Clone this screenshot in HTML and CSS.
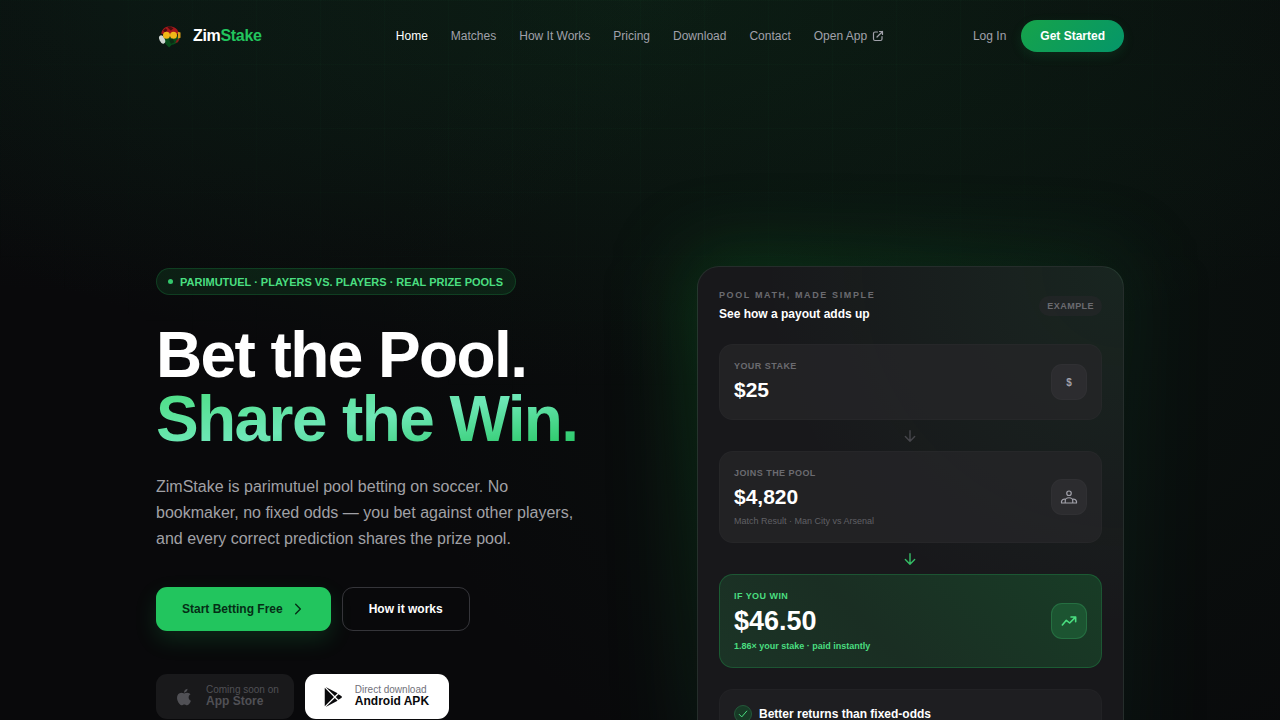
FILE: index.html
```html
<!DOCTYPE html>
<html lang="en">
<head>
<meta charset="utf-8">
<meta name="viewport" content="width=device-width, initial-scale=1">
<title>ZimStake</title>
<link rel="stylesheet" href="styles.css">
</head>
<body>
<div class="page">
  <header class="header container">
    <a class="brand" href="#">
      <svg class="brand-mark" viewBox="0 0 32 32" aria-hidden="true">
        <path d="M6 13C7 7 11 5 16 5s9 3 10 8l-5 2H10z" fill="#a5181b"/>
        <path d="M13 6l3-1 4 2-3 3zM8 10l3-3 2 2-2 3z" fill="#4d0c0f"/>
        <path d="M8 18h14l5-3c1 6-3 10-9 11l-3 3-4-4z" fill="#074d1b"/>
        <ellipse cx="7" cy="20" rx="3" ry="5" transform="rotate(-25 7 20)" fill="#cfd6d2"/>
        <circle cx="12" cy="15" r="4" fill="#f0b818"/>
        <circle cx="20" cy="15" r="4" fill="#f0b818"/>
        <path d="M25 11l3 1v6l-3 1z" fill="#d99d18"/>
        <path d="M15 20l4-1 2 4-4 2z" fill="#0d2b15"/>
        <path d="M24 20l3-1-2 4-3 1z" fill="#8c1a1a"/>
      </svg>
      <span>Zim<span class="brand-accent">Stake</span></span>
    </a>
    <nav class="nav" aria-label="Main">
      <a class="active" href="#">Home</a>
      <a href="#">Matches</a>
      <a href="#">How It Works</a>
      <a href="#">Pricing</a>
      <a href="#">Download</a>
      <a href="#">Contact</a>
      <a class="external" href="#">Open App
        <svg class="icon-line" width="12" height="12" viewBox="0 0 24 24" aria-hidden="true"><path d="M11 4H6a3 3 0 0 0-3 3v11a3 3 0 0 0 3 3h11a3 3 0 0 0 3-3v-5M15 3h6v6M21 3L10 14"/></svg>
      </a>
    </nav>
    <div class="account">
      <a class="login" href="#">Log In</a>
      <button class="get-started" type="button">Get Started</button>
    </div>
  </header>

  <main class="hero container">
    <section class="intro">
      <p class="pill"><span class="dot"></span>PARIMUTUEL · PLAYERS VS. PLAYERS · REAL PRIZE POOLS</p>
      <h1 class="headline">Bet the Pool. <span class="headline-accent">Share the Win.</span></h1>
      <p class="lead">ZimStake is parimutuel pool betting on soccer. No bookmaker, no fixed odds — you bet against other players, and every correct prediction shares the prize pool.</p>
      <div class="actions">
        <button class="btn btn-primary" type="button">Start Betting Free
          <svg class="icon-line" width="14" height="14" viewBox="0 0 24 24" aria-hidden="true"><path d="M8 4l8 8-8 8"/></svg>
        </button>
        <button class="btn btn-outline" type="button">How it works</button>
      </div>
      <div class="stores">
        <button class="store store-soon" type="button" disabled>
          <svg width="22" height="22" viewBox="0 0 24 24" fill="currentColor" aria-hidden="true"><path d="M17.050 20.280c-.98.95-2.050.8-3.080.35-1.090-.46-2.090-.48-3.240 0-1.440.62-2.200.44-3.060-.35C2.790 15.250 3.510 7.590 9.050 7.310c1.350.07 2.290.74 3.080.8 1.180-.24 2.310-.93 3.570-.84 1.510.12 2.650.72 3.400 1.800-3.120 1.870-2.380 5.980.48 7.130-.57 1.500-1.310 2.990-2.540 4.090zM12.030 7.250c-.15-2.230 1.660-4.070 3.740-4.250.29 2.580-2.340 4.500-3.740 4.250z"/></svg>
          <span class="store-text"><span class="store-note">Coming soon on</span><span class="store-name">App Store</span></span>
        </button>
        <button class="store store-apk" type="button">
          <svg width="22" height="22" viewBox="0 0 24 24" fill="currentColor" aria-hidden="true"><path d="M3 2v20l10-10z"/><path d="M4 1l10 10 3-3zM4 23l10-10 3 3zM15 12l3-3 3 2c1 .5 1 1.500 0 2l-3 2z"/></svg>
          <span class="store-text"><span class="store-note">Direct download</span><span class="store-name">Android APK</span></span>
        </button>
      </div>
    </section>

    <section class="card">
      <div class="card-head">
        <div>
          <p class="eyebrow">POOL MATH, MADE SIMPLE</p>
          <h2 class="card-title">See how a payout adds up</h2>
        </div>
        <span class="tag">EXAMPLE</span>
      </div>
      <div class="step">
        <div>
          <p class="label">YOUR STAKE</p>
          <p class="value">$25</p>
        </div>
        <span class="step-icon">$</span>
      </div>
      <div class="arrow"><svg class="icon-line" width="14" height="14" viewBox="0 0 24 24" aria-hidden="true"><path d="M12 3v18M4 13l8 8 8-8"/></svg></div>
      <div class="step">
        <div>
          <p class="label">JOINS THE POOL</p>
          <p class="value">$4,820</p>
          <p class="note">Match Result · Man City vs Arsenal</p>
        </div>
        <span class="step-icon"><svg class="icon-line thin" width="18" height="18" viewBox="0 0 24 24" aria-hidden="true"><circle cx="12" cy="7" r="3"/><path d="M7 20v-3a5 4 0 0 1 10 0v3M7 15a4 4 0 0 0-5 3v2h20v-2a4 4 0 0 0-5-3"/></svg></span>
      </div>
      <div class="arrow arrow-on"><svg class="icon-line" width="14" height="14" viewBox="0 0 24 24" aria-hidden="true"><path d="M12 3v18M4 13l8 8 8-8"/></svg></div>
      <div class="step step-win">
        <div>
          <p class="label">IF YOU WIN</p>
          <p class="value">$46.50</p>
          <p class="note">1.86× your stake · paid instantly</p>
        </div>
        <span class="step-icon"><svg class="icon-line" width="16" height="16" viewBox="0 0 24 24" aria-hidden="true"><path d="M2 18l6-7 5 4 8-8M15 6h7v7"/></svg></span>
      </div>
      <div class="benefit">
        <span class="check"><svg class="icon-line" width="10" height="10" viewBox="0 0 24 24" aria-hidden="true"><path d="M3 13l6 6L21 5"/></svg></span>
        <p>Better returns than fixed-odds</p>
      </div>
    </section>
  </main>
</div>
</body>
</html>
```
FILE: styles.css
```css
* { box-sizing: border-box; }

body {
  margin: 0;
  background: #09090b;
  color: #fff;
  font-family: "Liberation Sans", Arial, sans-serif;
  font-size: 12px;
}

p, h1, h2 { margin: 0; }
a { color: inherit; text-decoration: none; }
button { font: inherit; cursor: pointer; }

.page {
  position: relative;
  isolation: isolate;
  min-height: 100vh;
  overflow: hidden;
  background:
    radial-gradient(ellipse 900px 380px at 50% 0, rgba(22, 101, 52, 0.2), transparent),
    radial-gradient(ellipse 640px 560px at 80% 40%, rgba(16, 80, 42, 0.12), transparent),
    radial-gradient(ellipse 600px 300px at 10% 0, rgba(22, 101, 72, 0.08), transparent);
}

.page::before {
  content: "";
  position: absolute;
  inset: 0;
  z-index: -1;
  background-image:
    linear-gradient(rgba(74, 222, 128, 0.02) 1px, transparent 1px),
    linear-gradient(90deg, rgba(74, 222, 128, 0.02) 1px, transparent 1px);
  background-size: 64px 64px;
  mask-image: radial-gradient(ellipse 900px 420px at 50% 0, #000 40%, transparent);
}

.container {
  width: 100%;
  max-width: 1016px;
  margin: 0 auto;
  padding: 0 24px;
}

.icon-line {
  fill: none;
  stroke: currentColor;
  stroke-width: 2.4;
  stroke-linecap: round;
  stroke-linejoin: round;
}
.icon-line.thin { stroke-width: 1.6; }

.header {
  display: grid;
  grid-template-columns: 1fr auto 1fr;
  align-items: center;
  height: 71px;
}

.brand {
  display: flex;
  align-items: center;
  gap: 9px;
  font-size: 16px;
  font-weight: 700;
  letter-spacing: -0.02em;
}
.brand-mark { width: 28px; height: 28px; }
.brand-accent { color: #22c55e; }

.nav {
  display: flex;
  align-items: center;
  gap: 23px;
  color: #a1a1aa;
}
.nav .active { color: #fff; }
.external { display: flex; align-items: center; gap: 5px; }

.account {
  display: flex;
  align-items: center;
  justify-content: flex-end;
  gap: 15px;
  color: #a1a1aa;
}
.get-started {
  height: 32px;
  padding: 0 19px;
  border: 0;
  border-radius: 16px;
  background: linear-gradient(135deg, #16a34a, #059669);
  color: #fff;
  font-weight: 700;
  box-shadow: 0 4px 12px rgba(22, 163, 74, 0.14);
}

.hero {
  display: grid;
  grid-template-columns: 17fr 15fr;
  gap: 57px;
  align-items: start;
  padding-top: 195px;
}

.intro { padding: 2px 0 71px; }

.pill {
  display: inline-flex;
  align-items: center;
  gap: 7px;
  height: 27px;
  padding: 0 12px 0 11px;
  border: 1px solid rgba(34, 197, 94, 0.18);
  border-radius: 14px;
  background: rgba(34, 197, 94, 0.11);
  color: #4ade80;
  font-size: 11px;
  font-weight: 700;
}
.dot { width: 5px; height: 5px; border-radius: 50%; background: #34c76c; }

.headline {
  margin-top: 28px;
  font-size: 64px;
  line-height: 64px;
  letter-spacing: -0.025em;
}
.headline-accent {
  display: block;
  width: fit-content;
  background: linear-gradient(to bottom right, #4ade80, #6ee7b7 50%, #22c55e);
  background-clip: text;
  color: transparent;
}

.lead {
  max-width: 427px;
  margin-top: 23px;
  color: #a1a1a6;
  font-size: 16px;
  line-height: 26px;
}

.actions { display: flex; gap: 11px; margin-top: 35px; }
.btn {
  display: flex;
  align-items: center;
  gap: 8px;
  height: 44px;
  padding: 0 26px;
  border: 0;
  border-radius: 11px;
  font-weight: 700;
}
.btn-primary {
  background: #22c55e;
  color: #052e16;
  box-shadow: 0 9px 22px rgba(34, 197, 94, 0.16);
}
.btn-outline {
  border: 1px solid #35353a;
  background: transparent;
  color: #fff;
}

.stores { display: flex; gap: 11px; margin-top: 43px; }
.store {
  display: flex;
  align-items: center;
  gap: 11px;
  height: 45px;
  padding: 0 17px;
  border: 0;
  border-radius: 11px;
  text-align: left;
}
.store-soon { padding-right: 15px; background: #19191b; color: #505055; cursor: default; }
.store-apk { padding-right: 20px; background: #fff; color: #09090b; }
.store-text { display: flex; flex-direction: column; }
.store-note { font-size: 10px; line-height: 10px; }
.store-name { font-weight: 700; line-height: 13px; }
.store-apk .store-note { color: #71717a; }

.card {
  position: relative;
  padding: 21px;
  border: 1px solid rgba(120, 180, 145, 0.14);
  border-radius: 22px;
  background:
    radial-gradient(circle at 100% 0, rgba(34, 197, 94, 0.08), transparent 360px),
    #18181b;
}
.card::before {
  content: "";
  position: absolute;
  inset: -14px;
  z-index: -1;
  border-radius: 32px;
  background: linear-gradient(135deg, rgba(12, 110, 36, 0.4), rgba(16, 100, 60, 0.12) 55%, rgba(16, 90, 60, 0.1));
  filter: blur(36px);
}

.card-head {
  display: flex;
  align-items: center;
  justify-content: space-between;
  margin-bottom: 20px;
}
.eyebrow {
  color: #6b6b70;
  font-size: 9px;
  font-weight: 700;
  line-height: 14px;
  letter-spacing: 0.18em;
}
.card-title { margin-top: 2px; font-size: 12px; line-height: 20px; }
.tag {
  padding: 5px 8px;
  border-radius: 10px;
  background: rgba(39, 39, 42, 0.6);
  color: #6b6b70;
  font-size: 9px;
  font-weight: 700;
  letter-spacing: 0.05em;
}

.step {
  display: flex;
  align-items: center;
  justify-content: space-between;
  padding: 14px;
  border: 1px solid rgba(255, 255, 255, 0.02);
  border-radius: 14px;
  background: rgba(37, 37, 40, 0.75);
}
.label {
  color: #6b6b70;
  font-size: 9px;
  font-weight: 700;
  line-height: 14px;
  letter-spacing: 0.05em;
}
.value {
  margin-top: 2px;
  font-size: 21px;
  font-weight: 700;
  line-height: 30px;
}
.note { margin-top: 2px; color: #606064; font-size: 9px; line-height: 14px; }

.step-icon {
  display: grid;
  place-items: center;
  width: 36px;
  height: 36px;
  border: 1px solid rgba(255, 255, 255, 0.02);
  border-radius: 11px;
  background: #2c2c2f;
  color: #a1a1aa;
  font-size: 10px;
  font-weight: 700;
}

.step-win {
  border-color: rgba(34, 197, 94, 0.25);
  background: linear-gradient(45deg, #1b3426, #1a2e23 40%, #183c26);
}
.step-win .label, .step-win .note { color: #4ade80; }
.step-win .value { font-size: 27px; line-height: 32px; }
.step-win .note { font-weight: 700; }
.step-win .step-icon {
  border-color: rgba(74, 222, 128, 0.2);
  background: #1c5431;
  color: #4ade80;
}

.arrow {
  display: grid;
  place-items: center;
  height: 31px;
  color: #46464b;
}
.arrow-on { color: #35bd66; }

.benefit {
  display: flex;
  align-items: center;
  gap: 7px;
  margin-top: 21px;
  padding: 15px 14px;
  border: 1px solid rgba(255, 255, 255, 0.02);
  border-radius: 14px;
  background: #1e1e21;
  font-weight: 700;
}
.check {
  display: grid;
  place-items: center;
  width: 18px;
  height: 18px;
  border: 1px solid #24583a;
  border-radius: 50%;
  background: #173a26;
  color: #4ade80;
}
```
